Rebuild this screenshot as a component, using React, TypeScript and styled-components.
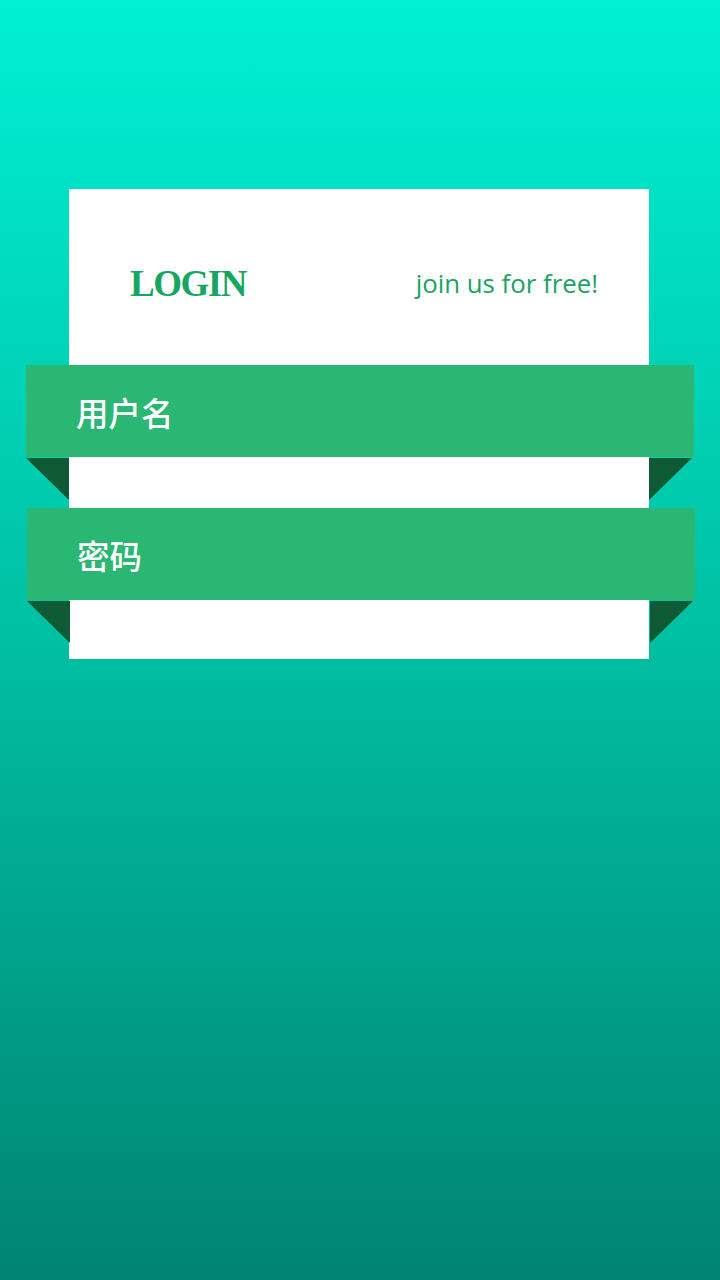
import React from "react";
import styled, { createGlobalStyle } from "styled-components";

const GlobalStyle = createGlobalStyle`
  html, body {
    margin: 0;
    padding: 0;
  }
  body {
    font-family: "Open Sans", "Noto Sans CJK SC", sans-serif;
  }
`;

const Page = styled.div`
  width: 720px;
  height: 1280px;
  background: linear-gradient(180deg, #00f0d4 0%, #00bfa2 50%, #008472 100%);
  padding-top: 189px;
  box-sizing: border-box;
  overflow: hidden;
`;

const Card = styled.div`
  width: 580px;
  height: 470px;
  margin-left: 69px;
  background: #ffffff;
  display: flex;
  flex-direction: column;
`;

const Header = styled.div`
  height: 176px;
  display: flex;
  align-items: center;
  justify-content: space-between;
  padding: 0 51px 0 61px;
  box-sizing: border-box;
`;

const Title = styled.h1`
  margin: 0;
  font-family: "Liberation Serif", serif;
  font-weight: 700;
  font-size: 37px;
  letter-spacing: -1.5px;
  color: #17a662;
  padding-top: 12px;
`;

const Join = styled.span`
  font-family: "Open Sans", sans-serif;
  font-size: 25.8px;
  color: #1ba263;
  padding-top: 12px;
`;

const Fields = styled.div`
  display: flex;
  flex-direction: column;
  gap: 51px;
`;

const Ribbon = styled.div<{ $shift: number }>`
  position: relative;
  height: 92px;
  margin-left: ${(p) => -43 + p.$shift}px;
  margin-right: ${(p) => -45 - p.$shift}px;
  background: #2ab673;
  display: flex;
  align-items: center;
  padding-left: 50px;
  color: #ffffff;
  font-family: "Noto Sans CJK SC", sans-serif;
  font-size: 32.5px;
  font-weight: 500;

  &::before,
  &::after {
    content: "";
    position: absolute;
    top: 93px;
    width: 0;
    height: 0;
    border-top: 42px solid #0e5a35;
  }
  &::before {
    left: 0;
    border-left: 43px solid transparent;
  }
  &::after {
    right: 2px;
    border-right: 43px solid transparent;
  }
`;

export default function App() {
  return (
    <>
      <GlobalStyle />
      <Page>
        <Card>
          <Header>
            <Title>LOGIN</Title>
            <Join>join us for free!</Join>
          </Header>
          <Fields>
            <Ribbon $shift={0}>用户名</Ribbon>
            <Ribbon $shift={1}>密码</Ribbon>
          </Fields>
        </Card>
      </Page>
    </>
  );
}
